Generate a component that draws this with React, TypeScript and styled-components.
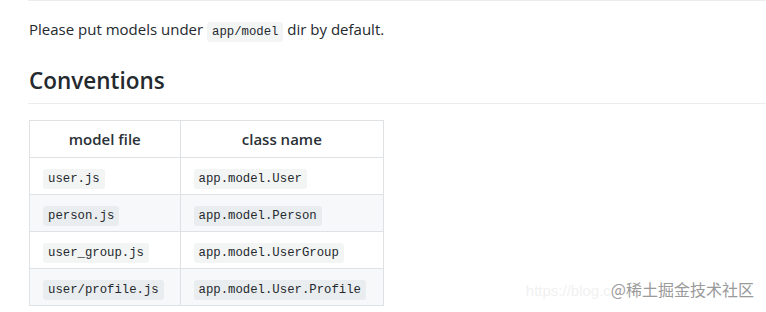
import React from "react";
import styled, { createGlobalStyle } from "styled-components";

const Global = createGlobalStyle`
  html, body { margin: 0; padding: 0; background: #fff; }
  body { width: 766px; height: 312px; overflow: hidden; position: relative; }
`;

const Page = styled.div`
  font-family: "Open Sans", "Noto Sans", sans-serif;
  color: #24292e;
  padding-left: 29px;
  position: relative;
  height: 312px;
`;

const TopRule = styled.div`
  height: 1px;
  background: #eaecef;
  margin-left: -1px;
`;

const Para = styled.p`
  margin: 16px 0 0;
  font-size: 15px;
  line-height: 24px;
`;

const Code = styled.code`
  font-family: "Liberation Mono", "DejaVu Sans Mono", monospace;
  font-size: 12.3px;
  line-height: 16px;
  background: rgba(27, 31, 35, 0.05);
  border-radius: 3px;
  padding: 3px 5px;
`;

const Heading = styled.h2`
  margin: 25px 0 0 -1px;
  padding: 0 0 7px 1px;
  font-size: 22.5px;
  font-weight: 600;
  line-height: 30px;
  border-bottom: 1px solid #eaecef;
`;

const Table = styled.table`
  margin-top: 16px;
  border-collapse: collapse;
  border-spacing: 0;
  width: 355px;
`;

const Row = styled.tr<{ $striped?: boolean }>`
  background: ${(p) => (p.$striped ? "#f6f8fa" : "#fff")};
  height: 37px;
`;

const Th = styled.th<{ $w: number }>`
  width: ${(p) => p.$w}px;
  border: 1px solid #dfe2e5;
  padding: 0 13px;
  font-size: 15px;
  line-height: 20px;
  font-weight: 600;
  color: #2b3036;
  text-align: center;
  box-sizing: border-box;
`;

const Td = styled.td`
  border: 1px solid #dfe2e5;
  padding: 0 13px;
  font-size: 15px;
  line-height: 20px;
`;

const Watermark = styled.div`
  position: absolute;
  right: 12px;
  bottom: 11px;
  font-family: "Noto Sans CJK SC", "Liberation Sans", sans-serif;
  font-size: 16px;
  line-height: 20px;
  color: #9a9a9a;
  white-space: nowrap;
`;

const Faint = styled.span`
  font-family: "Liberation Sans", sans-serif;
  color: #f1f1f1;
  font-size: 15px;
`;

const rows: [string, string][] = [
  ["user.js", "app.model.User"],
  ["person.js", "app.model.Person"],
  ["user_group.js", "app.model.UserGroup"],
  ["user/profile.js", "app.model.User.Profile"],
];

export default function App() {
  return (
    <>
      <Global />
      <Page>
        <TopRule />
        <Para>
          Please put models under <Code>app/model</Code> dir by default.
        </Para>
        <Heading>Conventions</Heading>
        <Table>
          <thead>
            <Row>
              <Th $w={151}>model file</Th>
              <Th $w={204}>class name</Th>
            </Row>
          </thead>
          <tbody>
            {rows.map(([f, c], i) => (
              <Row key={f} $striped={i % 2 === 1}>
                <Td>
                  <Code>{f}</Code>
                </Td>
                <Td>
                  <Code>{c}</Code>
                </Td>
              </Row>
            ))}
          </tbody>
        </Table>
        <Watermark>
          <Faint>https://blog.c</Faint>@稀土掘金技术社区
        </Watermark>
      </Page>
    </>
  );
}
